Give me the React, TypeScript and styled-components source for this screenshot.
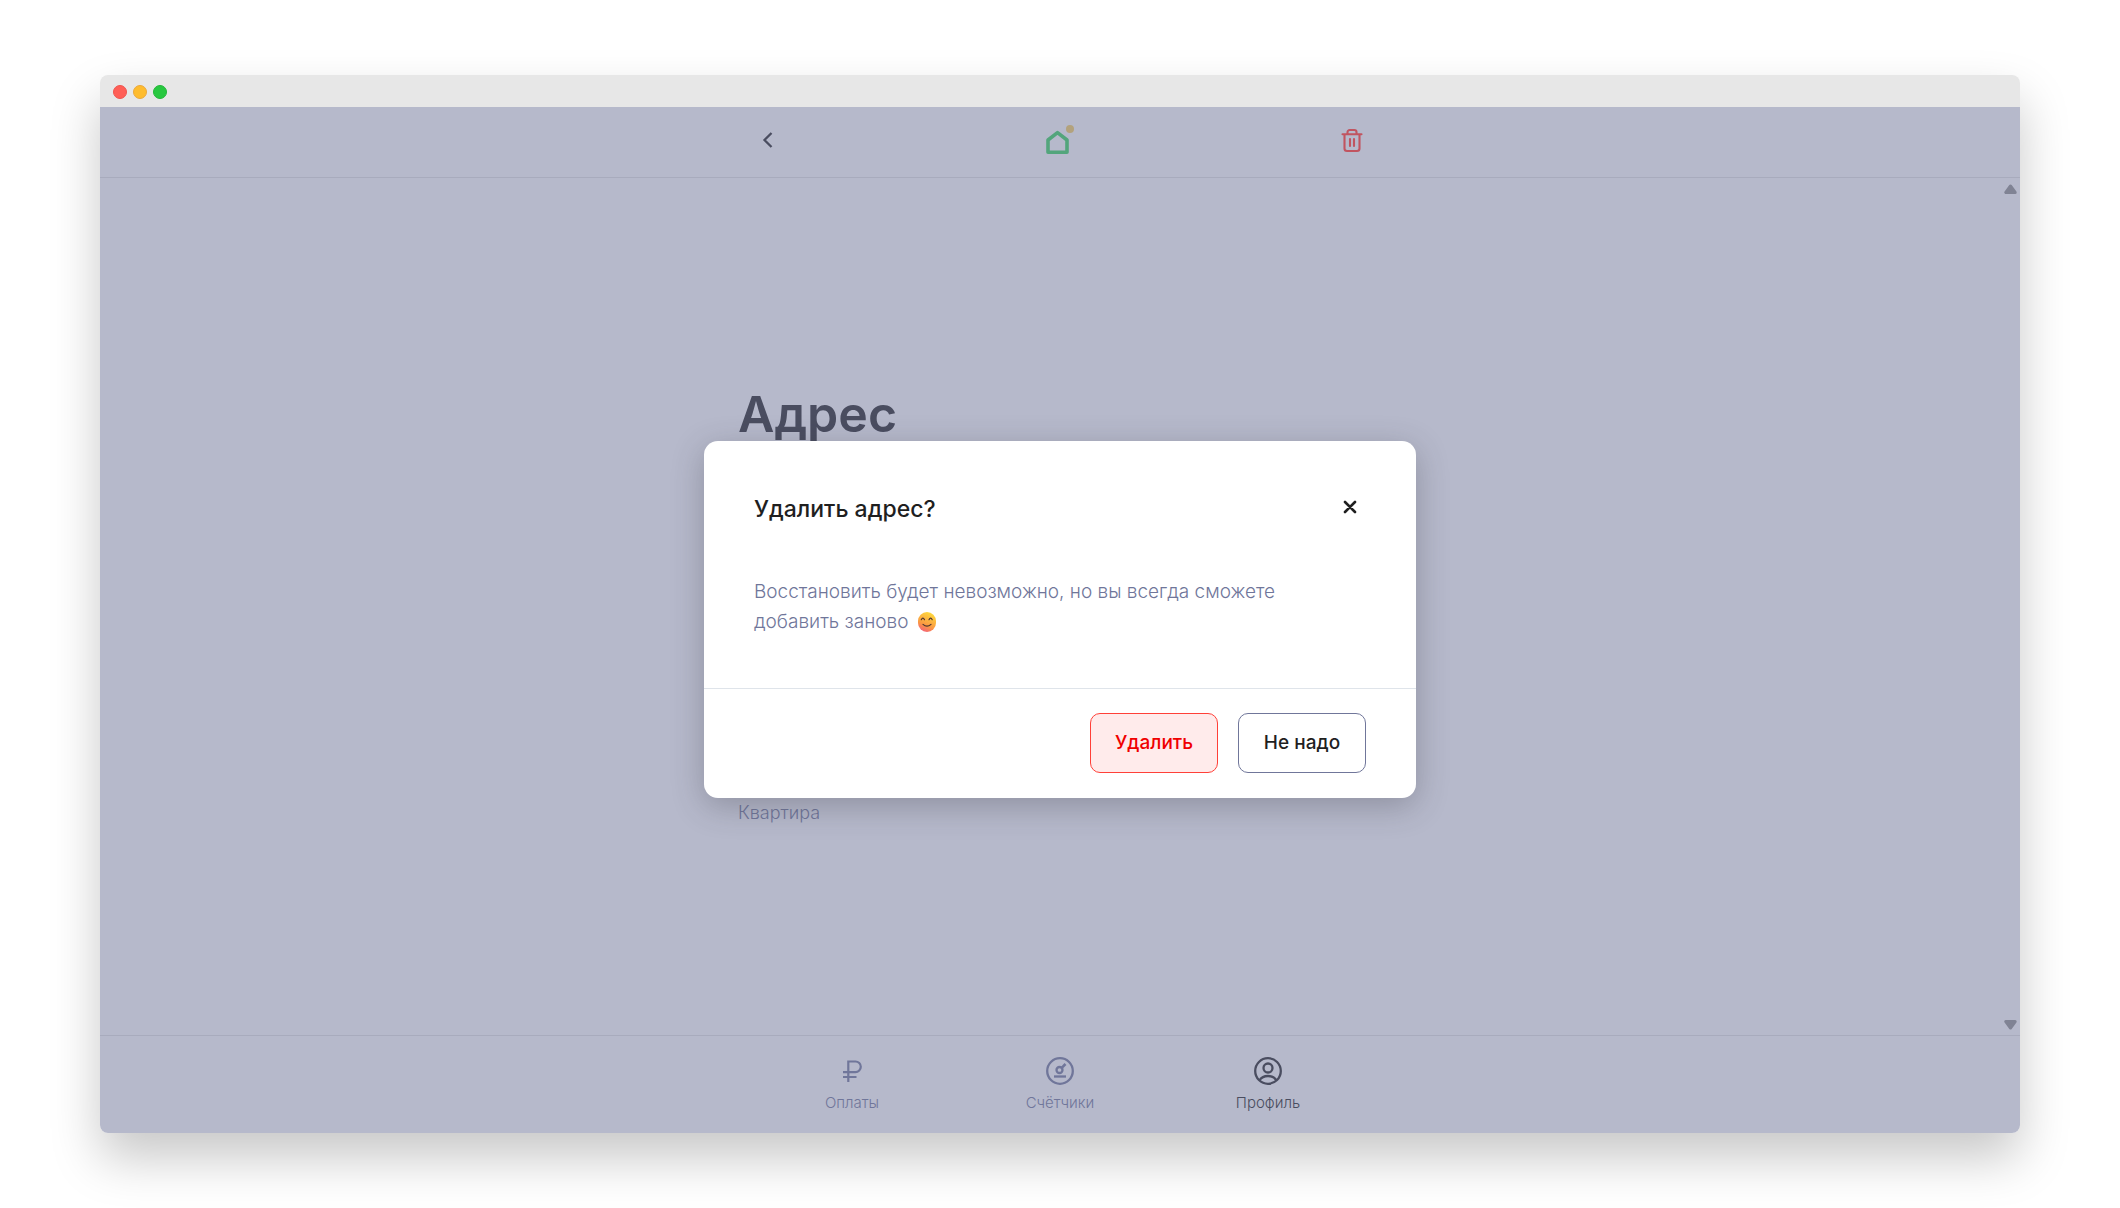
import React from "react";
import styled, { createGlobalStyle, css } from "styled-components";

const color = {
  veil: "#b6b9cb",
  line: "#a8abbd",
  muted: "#70769a",
  dark: "#4a4d60",
  ink: "#1f1f1f",
};

const GlobalStyle = createGlobalStyle`
  *, *::before, *::after { box-sizing: border-box; }
  body {
    margin: 0;
    background: #fff;
    font-family: Inter, "Open Sans", sans-serif;
    color: ${color.ink};
  }
  h1, h2, p { margin: 0; }
  button { font: inherit; color: inherit; cursor: pointer; }
`;

const Page = styled.div`
  min-height: 100vh;
  padding: 75px 100px;
  display: flex;
`;

const Window = styled.div`
  flex: 1;
  display: flex;
  flex-direction: column;
  border-radius: 8px;
  box-shadow: 0 25px 50px rgba(0, 0, 0, 0.22);
`;

const TitleBar = styled.div`
  height: 32px;
  padding: 2px 13px 0;
  display: flex;
  align-items: center;
  gap: 6px;
  background: #e7e7e7;
  border-radius: 8px 8px 0 0;
`;

const Dot = styled.span<{ $fill: string; $edge: string }>`
  width: 14px;
  height: 14px;
  border-radius: 50%;
  background: ${(p) => p.$fill};
  border: 1px solid ${(p) => p.$edge};
`;

const Screen = styled.div`
  position: relative;
  flex: 1;
  display: flex;
  flex-direction: column;
  background: ${color.veil};
  border-radius: 0 0 8px 8px;
  overflow: hidden;
`;

const Header = styled.header`
  border-bottom: 1px solid ${color.line};
`;

const HeaderRow = styled.div`
  max-width: 644px;
  height: 70px;
  margin: 0 auto;
  padding-bottom: 4px;
  display: flex;
  align-items: center;
  justify-content: space-between;
`;

const IconButton = styled.button<{ $size: number; $tone: string }>`
  width: ${(p) => p.$size}px;
  height: ${(p) => p.$size}px;
  padding: 0;
  border: 0;
  background: none;
  display: flex;
  align-items: center;
  justify-content: center;
  color: ${(p) => p.$tone};
`;

const Scroller = styled.div`
  flex: 1;
  display: grid;
  grid-template-columns: 20px 1fr 20px;
`;

const Main = styled.main`
  grid-column: 2;
  width: 100%;
  max-width: 644px;
  margin: 0 auto;
  padding-top: 206px;
  display: flex;
  flex-direction: column;
  gap: 357px;
`;

const Heading = styled.h1`
  font-size: 50px;
  line-height: 60px;
  font-weight: 600;
  color: ${color.dark};
`;

const FieldLabel = styled.p`
  font-size: 18px;
  line-height: 24px;
  font-weight: 300;
  color: ${color.muted};
`;

const ScrollTrack = styled.div`
  grid-column: 3;
  padding: 6px 3px 5px 4px;
  display: flex;
  flex-direction: column;
  justify-content: space-between;
`;

const ScrollButton = styled.button`
  width: 13px;
  height: 10px;
  padding: 0;
  border: 0;
  background: none;
  display: flex;
  color: #808394;
`;

const Nav = styled.nav`
  border-top: 1px solid ${color.line};
`;

const NavRow = styled.div`
  max-width: 624px;
  height: 97px;
  margin: 0 auto;
  padding-top: 20px;
  display: grid;
  grid-template-columns: repeat(3, 1fr);
`;

const NavLink = styled.a<{ $active?: boolean }>`
  display: flex;
  flex-direction: column;
  align-items: center;
  gap: 7px;
  font-size: 15px;
  line-height: 20px;
  font-weight: 300;
  text-decoration: none;
  color: ${(p) => (p.$active ? color.dark : color.muted)};
`;

const Overlay = styled.div`
  position: absolute;
  inset: 0;
  padding-bottom: 1px;
  display: flex;
  align-items: center;
  justify-content: center;
`;

const Dialog = styled.section`
  width: 100%;
  max-width: 712px;
  background: #fff;
  border-radius: 14px;
  box-shadow: 0 8px 32px rgba(50, 50, 60, 0.3);
`;

const DialogBody = styled.div`
  padding: 50px 50px 51px;
  display: flex;
  flex-direction: column;
  gap: 50px;
`;

const DialogTop = styled.div`
  display: flex;
  align-items: flex-start;
  justify-content: space-between;
`;

const DialogTitle = styled.h2`
  font-size: 23px;
  line-height: 36px;
  font-weight: 500;
`;

const Message = styled.p`
  max-width: 560px;
  font-size: 19px;
  line-height: 30px;
  font-weight: 300;
  color: ${color.muted};
`;

const Emoji = styled.svg`
  width: 20px;
  height: 20px;
  margin-left: 3px;
  vertical-align: -4px;
`;

const DialogFooter = styled.div`
  padding: 24px 50px 25px;
  border-top: 1px solid #dfe4ea;
  display: flex;
  justify-content: flex-end;
  gap: 20px;
`;

const ActionButton = styled.button<{ $danger?: boolean }>`
  min-width: 128px;
  height: 60px;
  padding: 0 16px;
  border-radius: 10px;
  font-size: 19px;
  line-height: 30px;
  font-weight: 500;
  ${(p) =>
    p.$danger
      ? css`
          color: #f00000;
          background: #ffebeb;
          border: 1px solid #ff4038;
        `
      : css`
          color: ${color.ink};
          background: #fff;
          border: 1px solid ${color.muted};
        `}
`;

const BackIcon = () => (
  <svg width="24" height="24" viewBox="0 0 24 24" fill="none" stroke="currentColor" strokeWidth="2.300">
    <path d="M15.500 5 8.500 12l7 7" />
  </svg>
);

const Logo = () => (
  <svg width="28" height="30" viewBox="0 0 28 30" role="img" aria-label="Дом">
    <path d="M2 27.300V15L11.500 7.600 21 15v12.300z" fill="none" stroke="#53a57c" strokeWidth="3.600" strokeLinejoin="round" />
    <circle cx="24" cy="4" r="4" fill="#b3a27d" />
  </svg>
);

const TrashIcon = () => (
  <svg width="24" height="26" viewBox="0 0 24 26" fill="none" stroke="currentColor" strokeWidth="2.100" strokeLinecap="round" strokeLinejoin="round">
    <path d="M2.500 7.200h19M7.500 7V5.200a2.200 2.200 0 0 1 2.200-2.200h4.600a2.200 2.200 0 0 1 2.200 2.200V7M4.500 7.500v14a2.500 2.500 0 0 0 2.500 2.500h10a2.500 2.500 0 0 0 2.500-2.500v-14M10 12v7M14 12v7" />
  </svg>
);

const Arrow = ({ down }: { down?: boolean }) => (
  <svg width="13" height="10" viewBox="0 0 13 10" fill="currentColor" stroke="currentColor" strokeWidth="3" strokeLinejoin="round">
    <path d={down ? "M1.800 1.500h9.400L6.500 8z" : "M1.800 8.500h9.400L6.500 2z"} />
  </svg>
);

const RubleIcon = () => (
  <svg width="30" height="30" viewBox="0 0 30 30" fill="none" stroke="currentColor" strokeWidth="2.200">
    <path d="M11.300 26V5.500h7.200a5.300 5.300 0 0 1 0 10.600H6M6 21h13.500" />
  </svg>
);

const MeterIcon = () => (
  <svg width="30" height="30" viewBox="0 0 30 30" fill="none" stroke="currentColor" strokeWidth="2.300">
    <circle cx="15" cy="15" r="12.800" />
    <circle cx="14.500" cy="14" r="3" />
    <path d="m16.700 11.800 3.800-3.800" strokeWidth="2.600" />
    <path d="M9 20.500h12" />
  </svg>
);

const ProfileIcon = () => (
  <svg width="30" height="30" viewBox="0 0 30 30" fill="none" stroke="currentColor" strokeWidth="2.300">
    <circle cx="15" cy="15" r="12.800" />
    <circle cx="15" cy="12" r="4.500" />
    <path d="M6.500 24.300c1.800-2.900 5-4.300 8.500-4.300s6.700 1.400 8.500 4.300" />
  </svg>
);

const CloseIcon = () => (
  <svg width="14" height="14" viewBox="0 0 14 14" fill="none" stroke="currentColor" strokeWidth="2.600" strokeLinecap="round">
    <path d="m2 2 10 10M12 2 2 12" />
  </svg>
);

const SmilingFace = () => (
  <Emoji viewBox="0 0 20 20" role="img" aria-label="Улыбка">
    <defs>
      <linearGradient id="face" x1="0.700" y1="0" x2="0.300" y2="1">
        <stop offset="0" stopColor="#fddb3d" />
        <stop offset="0.650" stopColor="#fb9a42" />
        <stop offset="1" stopColor="#f4607a" />
      </linearGradient>
    </defs>
    <rect x="1" y="0" width="18" height="20" rx="9" fill="url(#face)" />
    <path d="M4.300 7.700q1.600-3 3.200 0M12 7.700q1.600-3 3.200 0M6 12.400q4 3.600 8 0" fill="none" stroke="#4d3430" strokeWidth="1.200" strokeLinecap="round" />
  </Emoji>
);

export default function App() {
  return (
    <>
      <GlobalStyle />
      <Page>
        <Window>
          <TitleBar>
            <Dot $fill="#ff5f57" $edge="#f0544d" />
            <Dot $fill="#febc2e" $edge="#eba83a" />
            <Dot $fill="#28c840" $edge="#22b637" />
          </TitleBar>
          <Screen>
            <Header>
              <HeaderRow>
                <IconButton type="button" aria-label="Назад" $size={60} $tone={color.dark}>
                  <BackIcon />
                </IconButton>
                <Logo />
                <IconButton type="button" aria-label="Удалить адрес" $size={60} $tone="#c15460">
                  <TrashIcon />
                </IconButton>
              </HeaderRow>
            </Header>
            <Scroller>
              <Main>
                <Heading>Адрес</Heading>
                <FieldLabel>Квартира</FieldLabel>
              </Main>
              <ScrollTrack>
                <ScrollButton type="button" aria-label="Прокрутить вверх">
                  <Arrow />
                </ScrollButton>
                <ScrollButton type="button" aria-label="Прокрутить вниз">
                  <Arrow down />
                </ScrollButton>
              </ScrollTrack>
            </Scroller>
            <Nav>
              <NavRow>
                <NavLink href="#payments">
                  <RubleIcon />
                  Оплаты
                </NavLink>
                <NavLink href="#meters">
                  <MeterIcon />
                  Счётчики
                </NavLink>
                <NavLink href="#profile" $active aria-current="page">
                  <ProfileIcon />
                  Профиль
                </NavLink>
              </NavRow>
            </Nav>
            <Overlay>
              <Dialog role="dialog" aria-modal="true" aria-labelledby="dialog-title">
                <DialogBody>
                  <DialogTop>
                    <DialogTitle id="dialog-title">Удалить адрес?</DialogTitle>
                    <IconButton type="button" aria-label="Закрыть" $size={32} $tone={color.ink}>
                      <CloseIcon />
                    </IconButton>
                  </DialogTop>
                  <Message>
                    Восстановить будет невозможно, но вы всегда сможете добавить заново <SmilingFace />
                  </Message>
                </DialogBody>
                <DialogFooter>
                  <ActionButton type="button" $danger>
                    Удалить
                  </ActionButton>
                  <ActionButton type="button">Не надо</ActionButton>
                </DialogFooter>
              </Dialog>
            </Overlay>
          </Screen>
        </Window>
      </Page>
    </>
  );
}
